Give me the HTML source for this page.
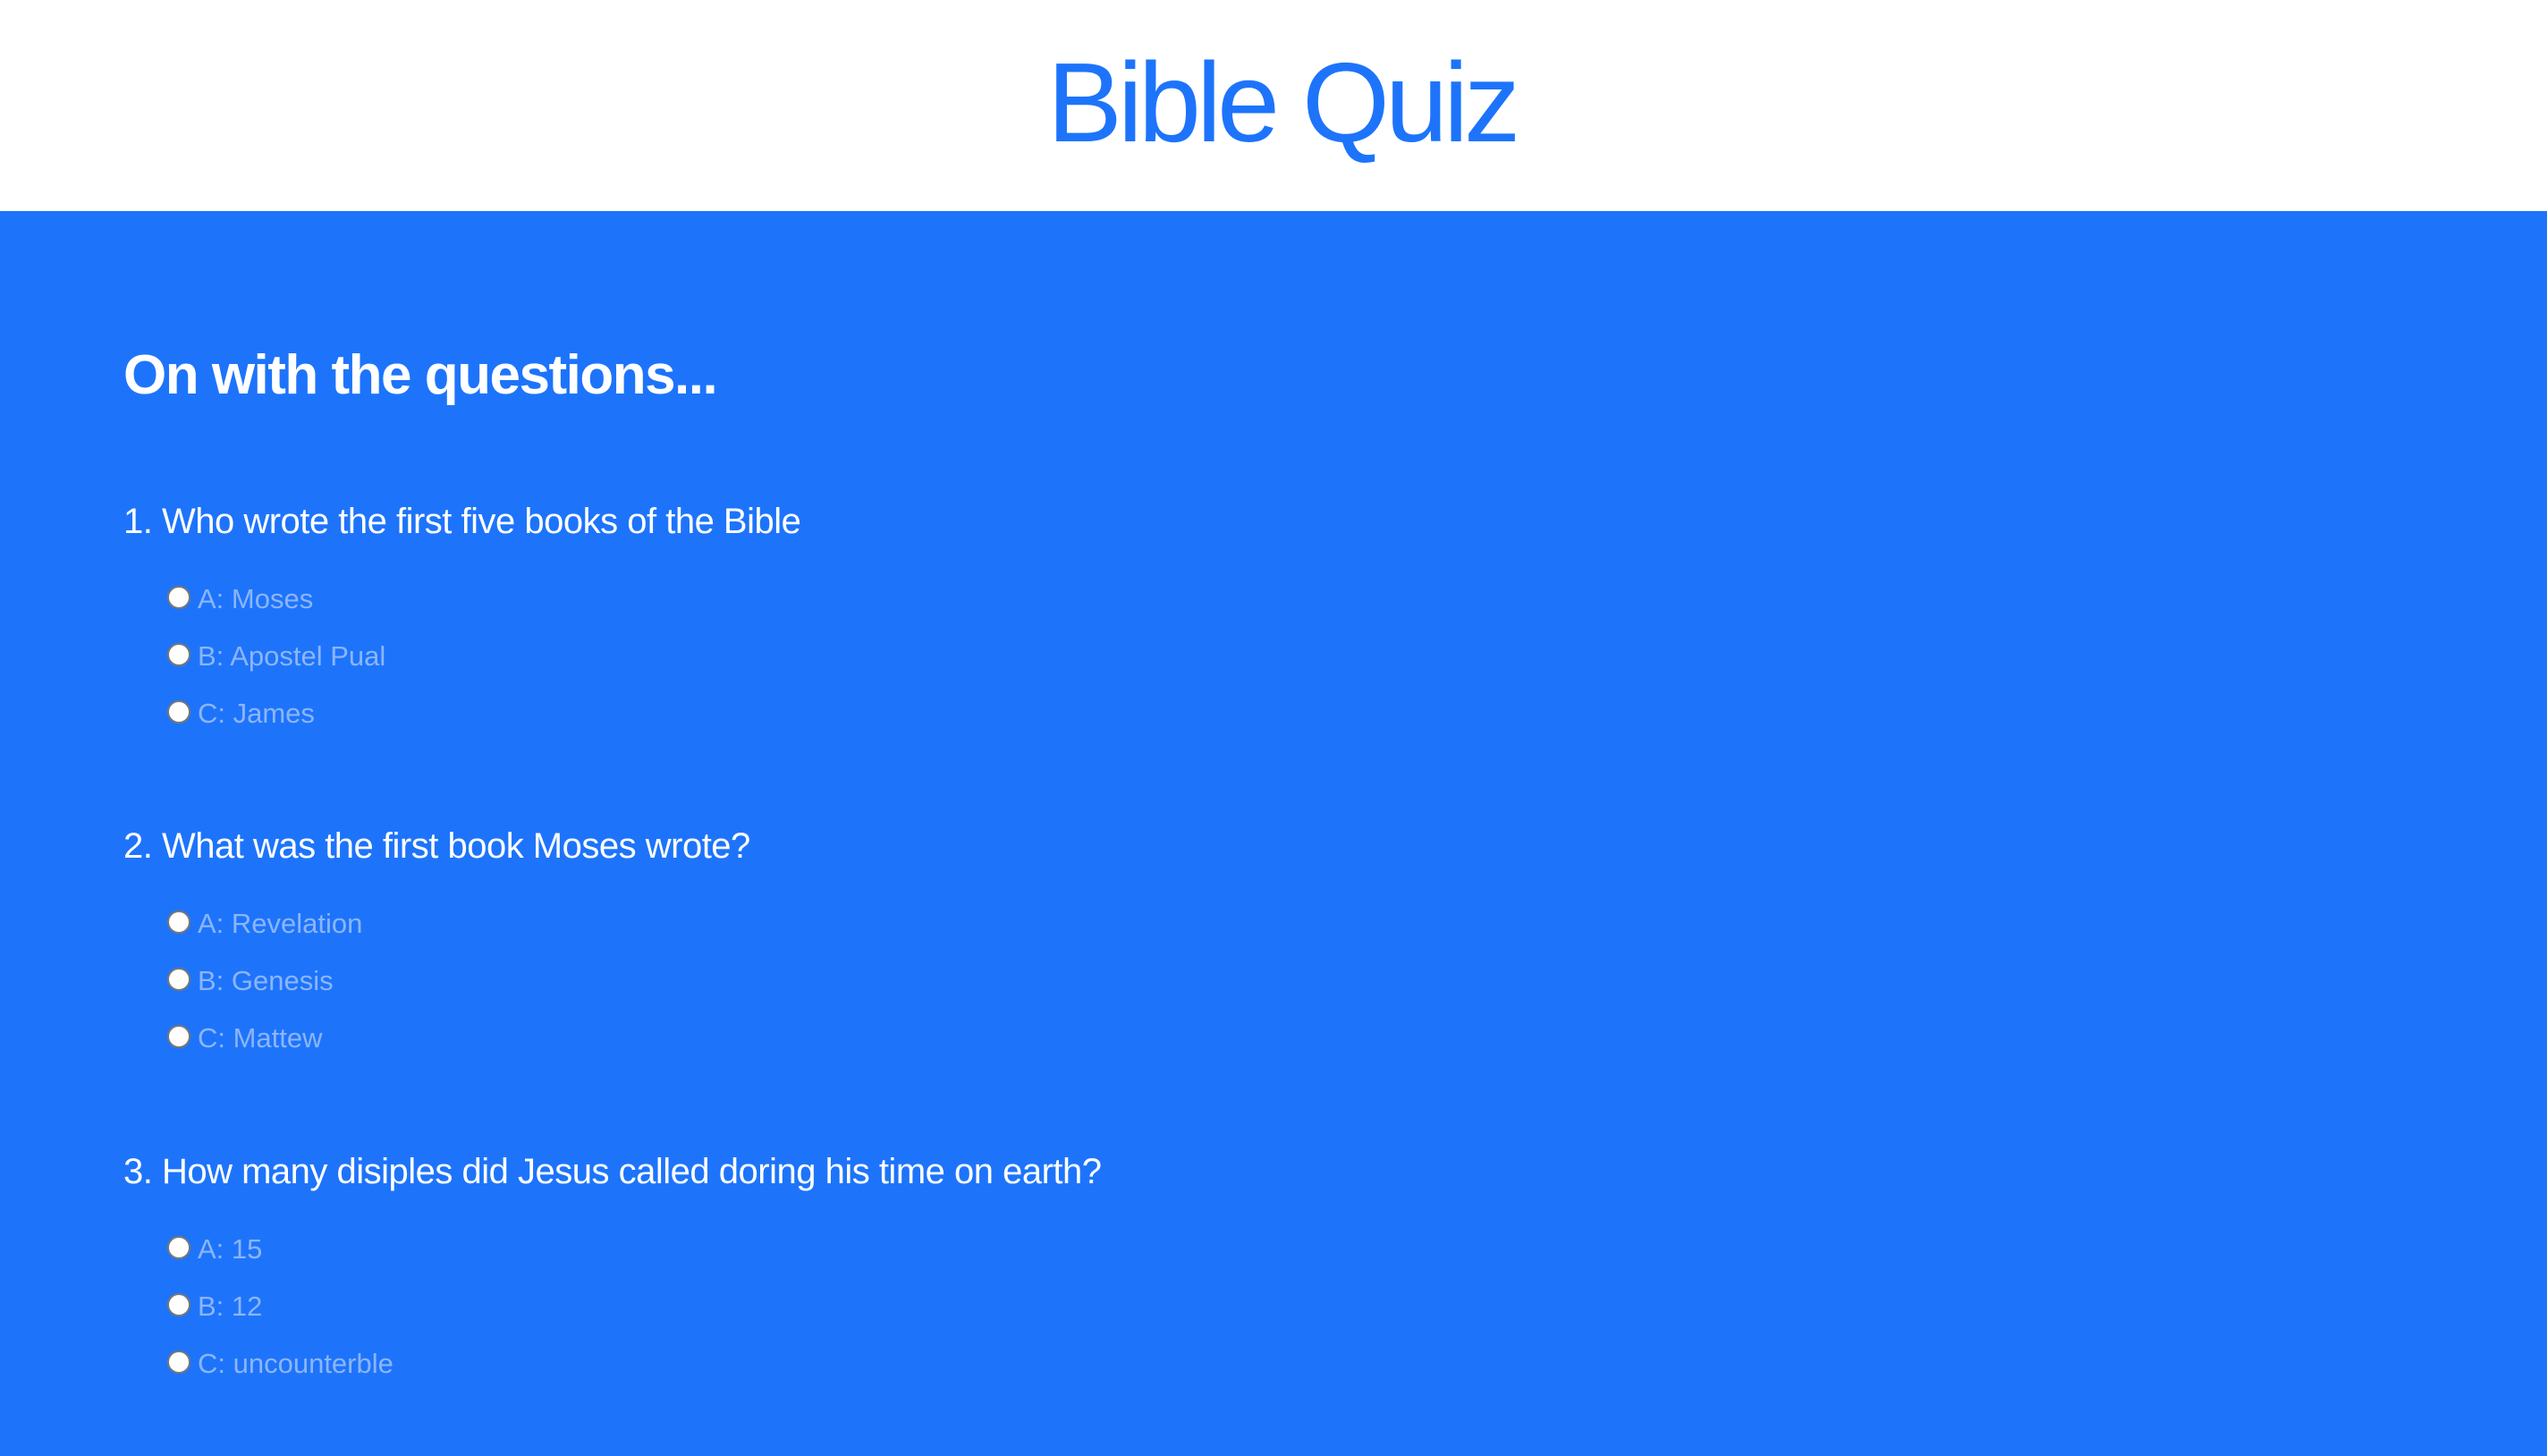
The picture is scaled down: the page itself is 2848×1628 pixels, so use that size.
<!DOCTYPE html>
<html><head><meta charset="utf-8"><style>
html,body{margin:0;padding:0;width:2848px;height:1628px;overflow:hidden;background:#1d74fb;font-family:"Liberation Sans",sans-serif;}
.hdr{position:absolute;left:0;top:0;width:2848px;height:236px;background:#fff;}
.t{position:absolute;white-space:nowrap;line-height:1;}
.title{left:9px;width:2848px;text-align:center;top:52px;font-size:126px;color:#1d74fb;letter-spacing:-5px;}
.h{left:138px;top:389px;font-size:62px;font-weight:bold;color:#fff;letter-spacing:-1.5px;}
.q{left:138px;font-size:40px;color:#fff;letter-spacing:-0.5px;}
.o{left:221px;font-size:31px;color:#8cb5f9;letter-spacing:0px;}
.r{position:absolute;left:187px;width:22px;height:22px;border-radius:50%;background:#fff;border:2px solid #777;}
</style></head><body>
<div class="hdr"></div>
<div class="t title">Bible Quiz</div>
<div class="t h">On with the questions...</div>

<div class="t q" style="top:563px">1. Who wrote the first five books of the Bible</div>
<div class="r" style="top:655px"></div><div class="t o" style="top:654px">A: Moses</div>
<div class="r" style="top:719px"></div><div class="t o" style="top:718px">B: Apostel Pual</div>
<div class="r" style="top:783px"></div><div class="t o" style="top:782px">C: James</div>

<div class="t q" style="top:926px">2. What was the first book Moses wrote?</div>
<div class="r" style="top:1018px"></div><div class="t o" style="top:1017px">A: Revelation</div>
<div class="r" style="top:1082px"></div><div class="t o" style="top:1081px">B: Genesis</div>
<div class="r" style="top:1146px"></div><div class="t o" style="top:1145px">C: Mattew</div>

<div class="t q" style="top:1290px">3. How many disiples did Jesus called doring his time on earth?</div>
<div class="r" style="top:1382px"></div><div class="t o" style="top:1381px">A: 15</div>
<div class="r" style="top:1446px"></div><div class="t o" style="top:1445px">B: 12</div>
<div class="r" style="top:1510px"></div><div class="t o" style="top:1509px">C: uncounterble</div>
</body></html>
